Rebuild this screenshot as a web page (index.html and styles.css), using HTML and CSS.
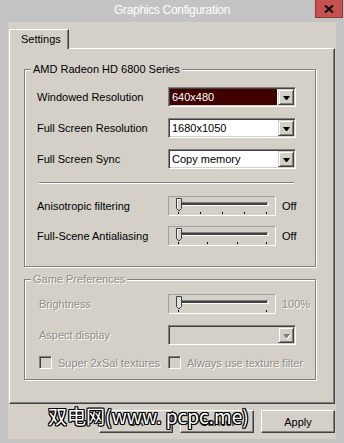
FILE: index.html
```html
<!DOCTYPE html>
<html>
<head>
  <meta charset="utf-8">
  <title>Graphics Configuration</title>
  <link rel="stylesheet" href="styles.css">
</head>
<body>
  <div class="window">
    <div class="titlebar">
      <span></span>
      <span class="title">Graphics Configuration</span>
      <span class="close">
        <svg width="10" height="8" viewBox="0 0 10 8"><path d="M1 0.5 L9 7.5 M9 0.5 L1 7.5" stroke="#111" stroke-width="2.2"/></svg>
      </span>
    </div>

    <div class="client">
      <div class="tabs">
        <div class="tab">Settings</div>
      </div>

      <div class="tab-panel">
        <fieldset class="group">
          <legend>AMD Radeon HD 6800 Series</legend>
          <div class="group-body">
            <div class="rows">
              <div class="row">
                <label>Windowed Resolution</label>
                <div class="combo"><span class="value selected">640x480</span><span class="drop"></span></div>
              </div>
              <div class="row">
                <label>Full Screen Resolution</label>
                <div class="combo"><span class="value">1680x1050</span><span class="drop"></span></div>
              </div>
              <div class="row">
                <label>Full Screen Sync</label>
                <div class="combo"><span class="value">Copy memory</span><span class="drop"></span></div>
              </div>
            </div>

            <div class="sep"></div>

            <div class="rows sliders">
              <div class="row slide">
                <label>Anisotropic filtering</label>
                <div class="slider">
                  <svg width="106" height="18">
                    <path d="M9 5.5 H99 M9 5.5 V8" stroke="#808080"/>
                    <path d="M10 6.5 H98 M10 7.5 H98" stroke="#404040"/>
                    <path d="M9 8.5 H99.5 M99.5 5 V9" stroke="#fff"/>
                    <path d="M7.5 1.5 H12.5 V11.5 L10 14 L7.5 11.5 Z" fill="#d4d0c8" stroke="#404040"/>
                    <path d="M8.5 11 V2.5 H11.5" fill="none" stroke="#fff"/>
                    <path d="M9.5 15 V17 M31.5 15 V17 M53.5 15 V17 M75.5 15 V17 M97.5 15 V17" stroke="#000"/>
                  </svg>
                </div>
                <span class="value-text">Off</span>
              </div>
              <div class="row slide">
                <label>Full-Scene Antialiasing</label>
                <div class="slider">
                  <svg width="106" height="18">
                    <path d="M9 5.5 H99 M9 5.5 V8" stroke="#808080"/>
                    <path d="M10 6.5 H98 M10 7.5 H98" stroke="#404040"/>
                    <path d="M9 8.5 H99.5 M99.5 5 V9" stroke="#fff"/>
                    <path d="M7.5 1.5 H12.5 V11.5 L10 14 L7.5 11.5 Z" fill="#d4d0c8" stroke="#404040"/>
                    <path d="M8.5 11 V2.5 H11.5" fill="none" stroke="#fff"/>
                    <path d="M9.5 15 V17 M38.5 15 V17 M68.5 15 V17 M97.5 15 V17" stroke="#000"/>
                  </svg>
                </div>
                <span class="value-text">Off</span>
              </div>
            </div>
          </div>
        </fieldset>

        <fieldset class="group disabled">
          <legend>Game Preferences</legend>
          <div class="group-body">
            <div class="rows">
              <div class="row slide">
                <label>Brightness</label>
                <div class="slider">
                  <svg width="106" height="18">
                    <defs>
                      <pattern id="dither" width="2" height="2" patternUnits="userSpaceOnUse">
                        <rect width="2" height="2" fill="#fff"/>
                        <rect width="1" height="1" fill="#c0c0c0"/>
                        <rect x="1" y="1" width="1" height="1" fill="#c0c0c0"/>
                      </pattern>
                    </defs>
                    <path d="M9 5.5 H99 M9 5.5 V8" stroke="#808080"/>
                    <path d="M10 6.5 H98 M10 7.5 H98" stroke="#404040"/>
                    <path d="M9 8.5 H99.5 M99.5 5 V9" stroke="#fff"/>
                    <path d="M7.5 1.5 H12.5 V11.5 L10 14 L7.5 11.5 Z" fill="url(#dither)" stroke="#404040"/>
                    <path d="M9.5 15 V17 M97.5 15 V17" stroke="#000"/>
                  </svg>
                </div>
                <span class="value-text">100%</span>
              </div>
              <div class="row">
                <label>Aspect display</label>
                <div class="combo off"><span class="value"></span><span class="drop"></span></div>
              </div>
              <div class="row checks">
                <div class="check-item"><span class="checkbox"></span><span>Super 2xSal textures</span></div>
                <div class="check-item"><span class="checkbox"></span><span>Always use texture filter</span></div>
              </div>
            </div>
          </div>
        </fieldset>
      </div>

      <div class="buttons">
        <button class="btn">OK</button>
        <button class="btn">Cancel</button>
        <button class="btn">Apply</button>
      </div>
    </div>

    <div class="watermark">双电网(www. pcpc.me)</div>
  </div>
</body>
</html>
```

FILE: styles.css
```css
body {
  margin: 0;
  font-family: "Liberation Sans", Arial, sans-serif;
  font-size: 11px;
  color: #000;
}

.window {
  position: relative;
  width: 344px;
  height: 443px;
  background: #c3c3c3;
  display: flex;
  flex-direction: column;
}

.titlebar {
  height: 22px;
  display: grid;
  grid-template-columns: 1fr auto 1fr;
  align-items: start;
}

.title {
  color: #fff;
  font-size: 12px;
  letter-spacing: -0.3px;
  line-height: 21px;
}

.close {
  justify-self: end;
  width: 28px;
  height: 18px;
  margin-right: 1px;
  box-sizing: border-box;
  background: #c75050;
  border: 1px solid #8c3b3b;
  border-top: none;
  display: flex;
  align-items: center;
  justify-content: center;
}

.client {
  flex: 1;
  margin: 0 8px 4px;
  padding: 7px 1px 0;
  background: #d4d0c8;
  display: flex;
  flex-direction: column;
}

.tabs {
  display: flex;
}

.tab {
  position: relative;
  width: 60px;
  height: 20px;
  margin-bottom: -1px;
  padding-left: 11px;
  box-sizing: border-box;
  line-height: 18px;
  background: #d4d0c8;
  border: 1px solid;
  border-color: #fff #404040 transparent #fff;
  border-bottom: none;
  border-top-left-radius: 2px;
  box-shadow: inset -1px 0 #808080;
}

.tab-panel {
  width: 326px;
  height: 356px;
  box-sizing: border-box;
  padding: 14px 0 0 14px;
  border: 1px solid;
  border-color: #fff #404040 #404040 #fff;
  box-shadow: inset -1px -1px #808080;
}

.group {
  width: 292px;
  min-width: 0;
  margin: 0;
  padding: 0;
  box-sizing: border-box;
  border: 1px solid #808080;
  box-shadow: 1px 1px 0 #fff, inset 1px 1px 0 #fff;
}

.group legend {
  margin-left: 6px;
  padding: 0 2px;
  line-height: 13px;
  background: #d4d0c8;
}

.group-body {
  padding: 11px 0 20px 12px;
}

.rows {
  display: flex;
  flex-direction: column;
  gap: 11px;
}

.rows.sliders {
  gap: 10px;
}

.row {
  display: grid;
  grid-template-columns: 131px 128px;
  align-items: center;
  min-height: 20px;
}

.row.slide {
  grid-template-columns: 131px 108px auto;
}

.sep {
  width: 255px;
  height: 0;
  margin: 13px 0 12px 2px;
  border-top: 1px solid #808080;
  border-bottom: 1px solid #fff;
}

.combo {
  height: 20px;
  padding: 1px;
  box-sizing: border-box;
  display: flex;
  background: #fff;
  border: 1px solid;
  border-color: #808080 #fff #fff #808080;
  box-shadow: inset 1px 1px #404040, inset -1px -1px #d4d0c8;
}

.combo .value {
  flex: 1;
  margin-right: 1px;
  padding-left: 2px;
  line-height: 16px;
}

.combo .value.selected {
  background: #3f0000;
  color: #fff;
}

.drop {
  width: 16px;
  height: 16px;
  box-sizing: border-box;
  display: flex;
  align-items: center;
  justify-content: center;
  background: #d4d0c8;
  border: 1px solid;
  border-color: #d4d0c8 #404040 #404040 #d4d0c8;
  box-shadow: inset 1px 1px #fff, inset -1px -1px #808080;
}

.drop::after {
  content: "";
  width: 1px;
  margin-top: 1px;
  border-top: 4px solid #000;
  border-left: 3px solid transparent;
  border-right: 3px solid transparent;
}

.slider {
  width: 108px;
  height: 20px;
  box-sizing: border-box;
  border: 1px solid;
  border-color: #a0a0a0 #fff #fff #a0a0a0;
}

.slider svg {
  display: block;
}

.value-text {
  padding-left: 6px;
}

.group.disabled {
  margin-top: 6px;
}

.group.disabled .group-body {
  padding: 8px 0 10px 14px;
}

.group.disabled .row {
  grid-template-columns: 129px 128px;
}

.group.disabled .row.slide {
  grid-template-columns: 129px 108px auto;
}

.group.disabled legend,
.group.disabled label,
.group.disabled .value-text,
.check-item {
  color: #8f8d87;
  text-shadow: 1px 1px 0 #fff;
}

.combo.off {
  background: #d4d0c8;
}

.combo.off .drop::after {
  border-top-color: #808080;
  filter: drop-shadow(1px 1px 0 #fff);
}

.row.checks {
  display: flex;
  min-height: 13px;
}

.check-item {
  width: 129px;
  display: flex;
  align-items: center;
  gap: 6px;
  white-space: nowrap;
}

.checkbox {
  width: 13px;
  height: 13px;
  box-sizing: border-box;
  flex-shrink: 0;
  background: #d4d0c8;
  border: 1px solid;
  border-color: #808080 #fff #fff #808080;
  box-shadow: inset 1px 1px #404040, inset -1px -1px #d4d0c8;
}

.buttons {
  display: flex;
  justify-content: flex-end;
  gap: 7px;
  margin-top: 6px;
}

.btn {
  width: 74px;
  height: 23px;
  padding: 0;
  font-family: inherit;
  font-size: 11px;
  color: #000;
  background: #d4d0c8;
  border: 1px solid;
  border-color: #fff #404040 #404040 #fff;
  box-shadow: inset -1px -1px #808080;
}

.watermark {
  position: absolute;
  left: 48px;
  top: 406px;
  font-family: "Noto Sans CJK SC", sans-serif;
  font-size: 19px;
  line-height: 19px;
  color: #fff;
  white-space: nowrap;
  text-shadow: 1px 0 #000, -1px 0 #000, 0 1px #000, 0 -1px #000, 1px 1px #000, -1px -1px #000, 1px -1px #000, -1px 1px #000;
}
```
